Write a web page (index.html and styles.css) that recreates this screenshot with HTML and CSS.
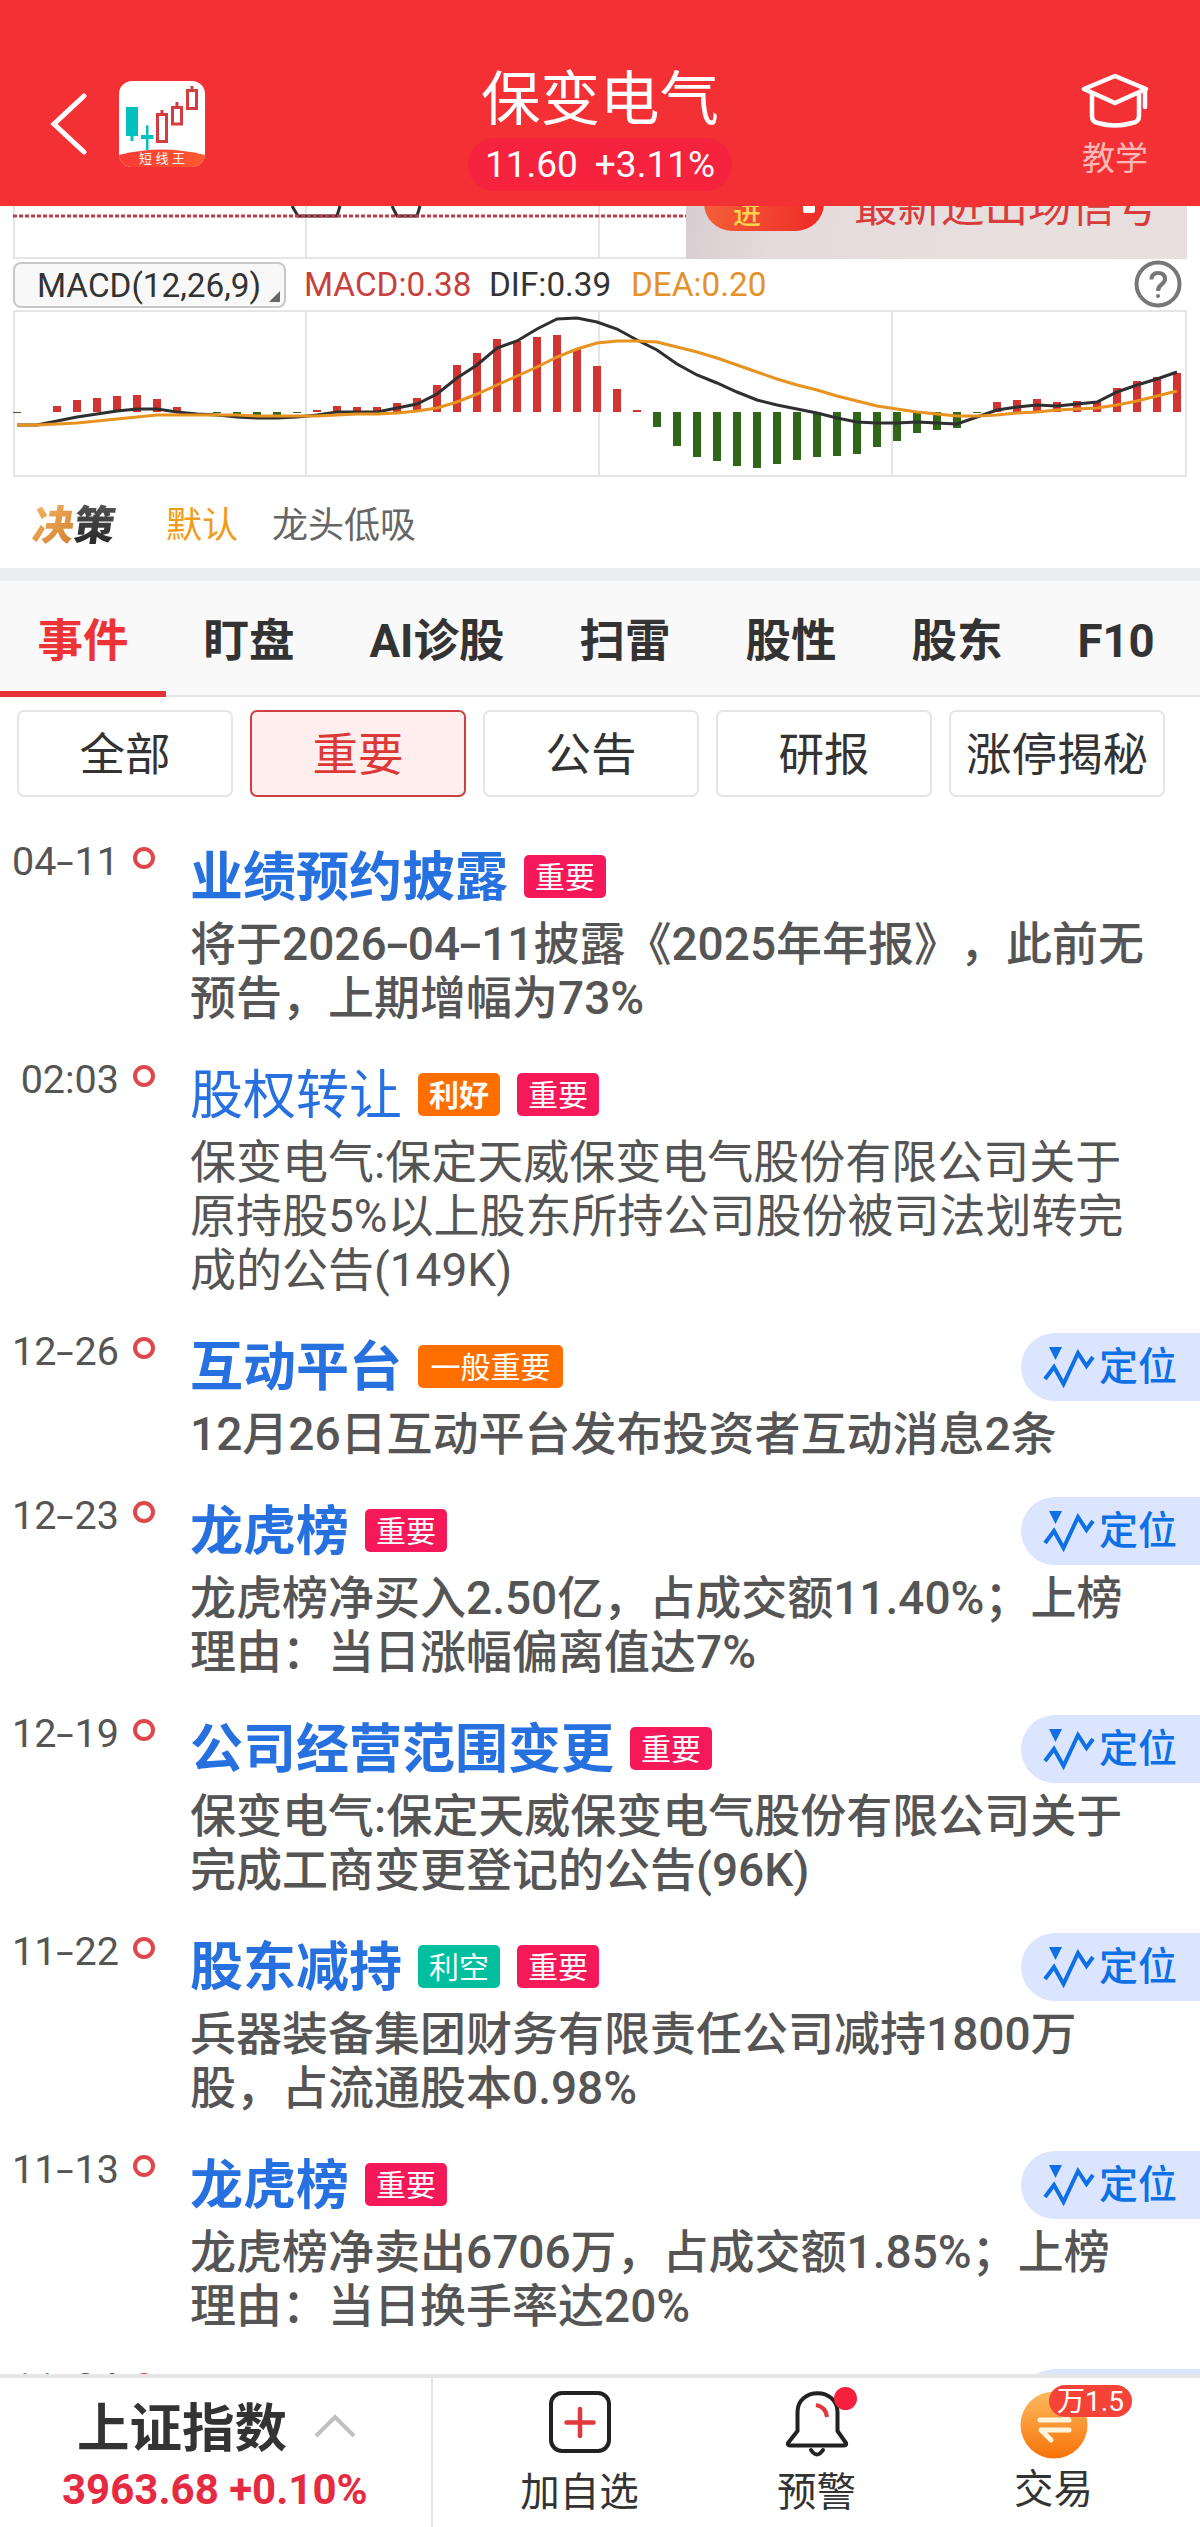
FILE: index.html
```
<!DOCTYPE html>
<html lang="zh-CN">
<head>
	<meta charset="utf-8">
	<meta name="viewport" content="width=device-width, initial-scale=1">
	<title>保变电气</title>
	<link rel="stylesheet" href="styles.css">
</head>
<body>
	<div class="app">
		<header class="header">
			<div class="header-left">
				<svg class="back" viewBox="0 0 38 64"><path d="M34 4 L4 32 L34 60"/></svg>
				<svg class="logo" viewBox="0 0 86 86">
					<defs>
						<clipPath id="logo-clip"><rect width="86" height="86" rx="13"/></clipPath>
						<linearGradient id="logo-bg"><stop offset="0" stop-color="#f83a35"/><stop offset="1" stop-color="#ff5a30"/></linearGradient>
					</defs>
					<g clip-path="url(#logo-clip)">
						<rect width="86" height="86" fill="#fff"/>
						<path d="M0 74 Q43 63 86 74 V86 H0Z" fill="url(#logo-bg)"/>
						<path d="M7 26h12v29h-4.500v5h-3v-5h-4.500z M27 44.500h2.500v9.500h5v4h-5v11h-2.500v-11h-5v-4h5z" fill="#00c0c0"/>
						<g fill="none" stroke="#d43d3f" stroke-width="3">
							<path d="M38.500 33.500h9v27h-9z M43 33v-4 M53.500 26.500h9v16.500h-9z M58 26v-5 M68.500 9.500h9v18h-9z M73 9v-4"/>
						</g>
						<text x="20" y="82" class="logo-text">短线王</text>
					</g>
				</svg>
			</div>
			<div class="header-title">
				<h1>保变电气</h1>
				<div class="price"><span>11.60</span><span>+3.11%</span></div>
			</div>
			<div class="teach">
				<svg viewBox="0 0 68 58"><path d="M34 4 L65 17 L34 31 L3 17Z M11 21 V44 Q11 50 17 51 Q34 56 51 51 Q58 50 58 44 V21 M64 18 V35"/></svg>
				<span>教学</span>
			</div>
		</header>

		<section class="chart">
			<div class="strip">
				<svg class="strip-lines" viewBox="0 0 1174 54">
					<path d="M1 0V52 M293 0V52 M586 0V52" stroke="#e5e5e5" stroke-width="2"/>
					<path d="M0 52H1174" stroke="#e5e5e5" stroke-width="2"/>
					<path d="M279 0L285 10H324L327 0 M379 0L384 10H404L407 0" fill="none" stroke="#2f2f2f" stroke-width="3"/>
					<path d="M0 10H673" stroke="#c23b4b" stroke-width="3" stroke-dasharray="4 2"/>
				</svg>
				<div class="signal">
					<div class="signal-switch"><span>进</span><i></i></div>
					<div class="signal-text">最新进出场信号</div>
				</div>
			</div>
			<div class="macd-bar">
				<div class="macd-select">MACD(12,26,9)</div>
				<span class="macd-value">MACD:0.38</span>
				<span class="dif-value">DIF:0.39</span>
				<span class="dea-value">DEA:0.20</span>
				<svg class="help" viewBox="0 0 48 48"><circle cx="24" cy="24" r="21.500"/><path d="M17.500 19.500 Q17.500 13 24 13 Q31 13 31 19 Q31 22 27.500 24.500 Q24 27 24 31"/><circle class="help-dot" cx="24" cy="36" r="2"/></svg>
			</div>
			<svg id="macd" viewBox="0 0 1174 167">
				<path d="M1 1H1173V166H1Z M293 1V166 M586 1V166 M879 1V166" fill="none" stroke="#e5e5e5" stroke-width="2"/>
			</svg>
			<div class="decision">
				<div class="decision-logo"><span>决</span><span>策</span></div>
				<a class="active">默认</a>
				<a>龙头低吸</a>
			</div>
		</section>

		<nav class="tabs">
			<a class="active">事件</a>
			<a>盯盘</a>
			<a>AI诊股</a>
			<a>扫雷</a>
			<a>股性</a>
			<a>股东</a>
			<a>F10</a>
		</nav>

		<div class="filters">
			<button>全部</button>
			<button class="active">重要</button>
			<button>公告</button>
			<button>研报</button>
			<button>涨停揭秘</button>
		</div>

		<main class="events">
			<article class="event">
				<time>04<b>-</b>11</time><i class="dot"></i>
				<div class="event-body">
					<div class="event-title"><h2>业绩预约披露</h2><span class="tag">重要</span></div>
					<p>将于2026<b>-</b>04<b>-</b>11披露《2025年年报》，此前无<br>预告，上期增幅为73%</p>
				</div>
			</article>
			<article class="event read">
				<time>02:03</time><i class="dot"></i>
				<div class="event-body">
					<div class="event-title"><h2>股权转让</h2><span class="tag good">利好</span><span class="tag">重要</span></div>
					<p>保变电气:保定天威保变电气股份有限公司关于<br>原持股5%以上股东所持公司股份被司法划转完<br>成的公告(149K)</p>
				</div>
			</article>
			<article class="event">
				<time>12<b>-</b>26</time><i class="dot"></i>
				<div class="event-body">
					<div class="event-title"><h2>互动平台</h2><span class="tag normal">一般重要</span></div>
					<p>12月26日互动平台发布投资者互动消息2条</p>
				</div>
				<a class="locate"><svg viewBox="0 0 52 42"><use href="#locate-icon"/></svg>定位</a>
			</article>
			<article class="event">
				<time>12<b>-</b>23</time><i class="dot"></i>
				<div class="event-body">
					<div class="event-title"><h2>龙虎榜</h2><span class="tag">重要</span></div>
					<p>龙虎榜净买入2.50亿，占成交额11.40%；上榜<br>理由：当日涨幅偏离值达7%</p>
				</div>
				<a class="locate"><svg viewBox="0 0 52 42"><use href="#locate-icon"/></svg>定位</a>
			</article>
			<article class="event">
				<time>12<b>-</b>19</time><i class="dot"></i>
				<div class="event-body">
					<div class="event-title"><h2>公司经营范围变更</h2><span class="tag">重要</span></div>
					<p>保变电气:保定天威保变电气股份有限公司关于<br>完成工商变更登记的公告(96K)</p>
				</div>
				<a class="locate"><svg viewBox="0 0 52 42"><use href="#locate-icon"/></svg>定位</a>
			</article>
			<article class="event">
				<time>11<b>-</b>22</time><i class="dot"></i>
				<div class="event-body">
					<div class="event-title"><h2>股东减持</h2><span class="tag bad">利空</span><span class="tag">重要</span></div>
					<p>兵器装备集团财务有限责任公司减持1800万<br>股，占流通股本0.98%</p>
				</div>
				<a class="locate"><svg viewBox="0 0 52 42"><use href="#locate-icon"/></svg>定位</a>
			</article>
			<article class="event">
				<time>11<b>-</b>13</time><i class="dot"></i>
				<div class="event-body">
					<div class="event-title"><h2>龙虎榜</h2><span class="tag">重要</span></div>
					<p>龙虎榜净卖出6706万，占成交额1.85%；上榜<br>理由：当日换手率达20%</p>
				</div>
				<a class="locate"><svg viewBox="0 0 52 42"><use href="#locate-icon"/></svg>定位</a>
			</article>
			<article class="event">
				<time>11<b>-</b>04</time><i class="dot"></i>
				<div class="event-body"></div>
				<a class="locate"></a>
			</article>
		</main>

		<footer class="footer">
			<div class="index">
				<div class="index-name">上证指数
					<svg viewBox="0 0 42 24"><path d="M2 22 L21 3 L40 22"/></svg>
				</div>
				<div class="index-value">3963.68 +0.10%</div>
			</div>
			<div class="actions">
				<a class="action">
					<svg viewBox="0 0 70 70"><rect x="6" y="5" width="58" height="58" rx="11" fill="none" stroke="#222" stroke-width="4"/><path d="M35 21V48 M21.500 34.500H48.500" stroke="#e0383b" stroke-width="4.500" stroke-linecap="round"/></svg>
					<span>加自选</span>
				</a>
				<a class="action">
					<svg viewBox="0 0 70 70" fill="none" stroke-linecap="round" stroke-linejoin="round">
						<path d="M15.500 43 V24 C15.500 -1 55.500 -1 55.500 24 V43 L64 55 Q65 57.500 62 57.500 H8 Q5 57.500 6 55Z M29 62 Q35 71 41 62" stroke="#222" stroke-width="4"/>
						<path d="M34 17 Q44 19 45 29" stroke="#e0383b" stroke-width="4" stroke-linecap="butt"/>
					</svg>
					<i class="red-dot"></i>
					<span>预警</span>
				</a>
				<a class="action trade">
					<svg viewBox="0 0 70 70">
						<defs><linearGradient id="coin" x2="0" y2="1"><stop offset="0" stop-color="#fdbb60"/><stop offset="1" stop-color="#f87208"/></linearGradient></defs>
						<circle cx="35" cy="35" r="33.500" fill="url(#coin)"/>
						<path d="M21 30H50L41 22 M50 40H22L32 50" fill="none" stroke="#fff4de" stroke-width="5" stroke-linecap="round" stroke-linejoin="round"/>
					</svg>
					<i class="badge">万1.5</i>
					<span>交易</span>
				</a>
			</div>
		</footer>
	</div>

	<svg class="symbols">
		<symbol id="locate-icon" viewBox="0 0 52 42">
			<path d="M6 1H19L12.500 14Z" fill="#0d70e6"/>
			<path d="M2 33L11 21L20.500 38L35 7L43.500 20L50 11" fill="none" stroke="#0d70e6" stroke-width="4"/>
		</symbol>
	</svg>

	<script type="text/javascript">
		//one value per trading day, pixels above / below zero line
		const bars = [-1,0,6,12,14,16,17,13,5,0,-1,-2,-3,-3,-1,2,6,5,5,9,14,27,47,59,73,71,75,77,63,46,23,2,-15,-34,-45,-49,-54,-56,-52,-48,-45,-44,-42,-35,-29,-21,-18,-16,-1,10,12,13,10,11,11,24,31,35,39];
		const dif = [-13,-13,-9,-5,-2,1,3,3,0,-2,-3,-5,-6,-6,-5,-3,0,0,0,4,8,18,34,47,64,71,83,93,94,90,83,72,62,48,37,29,20,12,7,3,-1,-6,-10,-11,-11,-10,-11,-12,-5,2,5,7,6,8,10,20,27,33,40];
		const dea = [-13,-13,-12,-11,-9,-7,-5,-3,-3,-3,-3,-3,-4,-4,-4,-4,-3,-2,-2,-1,1,4,10,18,27,36,45,55,63,69,71,71,70,65,60,54,47,40,33,27,22,16,11,6,3,0,-2,-4,-4,-3,-1,0,2,3,4,7,11,16,21];

		const svg = document.getElementById("macd");
		const zero = 102;
		const step = 20;

		const add = (name,attrs)=>{
			const el = document.createElementNS("http://www.w3.org/2000/svg",name);
			for(let key in attrs){
				el.setAttribute(key,attrs[key]);
			}
			svg.appendChild(el);
		}

		//Bars
		bars.forEach((v,i)=>{
			if(v == 0) return;
			add("rect",{
				x: i*step,
				y: v > 0 ? zero-v : zero,
				width: 8,
				height: Math.abs(v),
				fill: v > 0 ? "#d23531" : "#306617"
			});
		});

		//Lines
		const drawLine = (data,color)=>{
			const points = data.map((v,i)=>(i*step+4)+","+(zero-v)).join(" ");
			add("polyline",{points: points, fill: "none", stroke: color, "stroke-width": 3});
		}
		drawLine(dif,"#2f2f2f");
		drawLine(dea,"#e8921f");
	</script>
</body>
</html>
```
FILE: styles.css
```
*{
	padding: 0;
	margin: 0;
	box-sizing: border-box;
}
body{
	background: #fff;
	color: #333;
	font-family: Roboto,"Noto Sans CJK SC",sans-serif;
	text-spacing-trim: space-all;
}
i{
	font-style: normal;
}
.app{
	width: 1200px;
	height: 2527px;
	display: flex;
	flex-direction: column;
	overflow: hidden;
}
.symbols{
	display: none;
}

/* header */
.header{
	height: 206px;
	flex-shrink: 0;
	background: #f33033;
	color: #fff;
	display: grid;
	grid-template-columns: 1fr 264px 1fr;
}
.header-left{
	display: flex;
	align-items: center;
	padding: 42px 0 0 50px;
}
.back{
	width: 38px;
	height: 64px;
	fill: none;
	stroke: #fff;
	stroke-width: 5;
	stroke-linecap: round;
}
.logo{
	width: 86px;
	height: 86px;
	margin-left: 31px;
}
.logo-text{
	font-size: 13px;
	letter-spacing: 3.5px;
	fill: #fff;
}
.header-title{
	padding-top: 62px;
	text-align: center;
}
.header-title h1{
	font-size: 59.5px;
	font-weight: 400;
	line-height: 76px;
	white-space: nowrap;
}
.price{
	height: 53px;
	border-radius: 27px;
	background: #f5233e;
	display: flex;
	align-items: center;
	justify-content: center;
	gap: 17px;
	font-size: 37px;
	line-height: 55px;
}
.teach{
	justify-self: end;
	width: 68px;
	margin-right: 51px;
	padding-top: 72px;
	text-align: center;
}
.teach svg{
	display: block;
	width: 68px;
	height: 58px;
	fill: none;
	stroke: #fff;
	stroke-width: 4.5;
	stroke-linejoin: round;
	stroke-linecap: round;
}
.teach span{
	display: block;
	margin-top: 9px;
	font-size: 33px;
	line-height: 40px;
	color: #fbb9b6;
	white-space: nowrap;
}

/* chart */
.chart{
	height: 362px;
	flex-shrink: 0;
	padding: 0 13px;
}
.strip{
	height: 54px;
	position: relative;
	overflow: hidden;
}
.strip-lines{
	display: block;
	width: 1174px;
	height: 54px;
}
.signal{
	position: absolute;
	top: 0;
	right: 0;
	width: 501px;
	height: 53px;
	background: linear-gradient(100deg,#d8cdd0,#e6dcdd 20%,#e8e0df);
	display: flex;
	align-items: flex-end;
	padding: 0 0 30px 18px;
	overflow: hidden;
}
.signal-switch{
	width: 120px;
	height: 58px;
	margin-bottom: -2px;
	flex-shrink: 0;
	border-radius: 28px;
	background: linear-gradient(100deg,#f5623a,#ee2a26);
	display: flex;
	align-items: flex-end;
	justify-content: space-between;
	padding: 0 9px 0 29px;
	font-size: 28px;
	line-height: 32px;
	font-weight: 500;
	color: #ffd34d;
}
.signal-switch i{
	width: 12px;
	height: 34px;
	margin-bottom: 18px;
	border-radius: 2px;
	background: #fff;
}
.signal-text{
	margin: 0 0 -4px 30px;
	font-size: 43.5px;
	line-height: 50px;
	color: #d93a3a;
	white-space: nowrap;
}
.macd-bar{
	height: 50px;
	display: flex;
	align-items: center;
	padding: 0 5px 0 0;
	font-size: 33.3px;
	line-height: 46px;
}
.macd-select{
	position: relative;
	width: 273px;
	height: 46px;
	margin-right: 18px;
	padding-left: 22px;
	border: 2px solid #c8c8c8;
	border-radius: 8px;
	background: #f8f8f8;
	line-height: 43px;
	white-space: nowrap;
}
.macd-select::after{
	content: "";
	position: absolute;
	right: 4px;
	bottom: 4px;
	border-left: 11px solid transparent;
	border-bottom: 11px solid #666;
}
.macd-value{
	width: 185px;
	color: #c8403c;
}
.dif-value{
	width: 142px;
}
.dea-value{
	color: #e5912a;
}
.help{
	width: 48px;
	height: 48px;
	margin: -2px 0 0 auto;
	fill: none;
	stroke: #777;
	stroke-width: 4;
}
.help .help-dot{
	fill: #777;
	stroke: none;
}
#macd{
	display: block;
	width: 1174px;
	height: 167px;
}
.decision{
	display: flex;
	align-items: center;
	height: 94px;
	padding: 4px 0 0 20px;
	font-size: 36px;
	line-height: 54px;
}
.decision a{
	color: #666;
	margin-right: 34px;
}
.decision a.active{
	color: #f39a16;
}
.decision-logo{
	width: 133px;
	font-size: 41px;
	font-weight: 900;
	transform: skewX(-8deg);
}
.decision-logo span{
	background: linear-gradient(135deg,#f7b565,#cd7d2a);
	-webkit-background-clip: text;
	background-clip: text;
	color: transparent;
}
.decision-logo span + span{
	background-image: linear-gradient(#555,#222);
}

/* tabs */
.tabs{
	height: 129px;
	flex-shrink: 0;
	border-top: 13px solid #ecedef;
	border-bottom: 2px solid #e5e5e5;
	background: #f9f9f9;
	display: flex;
}
.tabs a{
	height: 116px;
	padding: 0 37.5px;
	font-size: 45.5px;
	font-weight: 700;
	line-height: 122px;
	white-space: nowrap;
}
.tabs a.active{
	color: #ee3336;
	border-bottom: 6px solid #e43438;
}
.filters{
	display: flex;
	flex-shrink: 0;
	gap: 17px;
	padding: 13px 17px 0;
}
.filters button{
	width: 216px;
	height: 87px;
	border: 2px solid #e5e5e5;
	border-radius: 7px;
	background: #fff;
	color: #333;
	font-family: inherit;
	font-size: 45.5px;
	line-height: 83px;
	padding-top: 2px;
	white-space: nowrap;
}
.filters button.active{
	border-color: #cc4040;
	background: #feefee;
	color: #dc3936;
}

/* events */
.events{
	flex: 1;
	min-height: 0;
	padding-top: 46px;
	overflow: hidden;
}
.event{
	display: flex;
	align-items: flex-start;
	position: relative;
	padding-bottom: 36px;
}
.event time{
	width: 119px;
	text-align: right;
	font-size: 39.5px;
	line-height: 37px;
	color: #555;
}
/* wide hyphen inside dates */
.event b{
	display: inline-block;
	width: .46em;
	text-align: center;
	font-weight: inherit;
	transform: scaleX(1.6);
}
.dot{
	width: 22px;
	height: 22px;
	margin: 4px 0 0 14px;
	border: 4px solid #e0474b;
	border-radius: 50%;
}
.event-body{
	margin-left: 35px;
}
.event-title{
	display: flex;
	align-items: center;
	height: 66px;
	margin-bottom: 8px;
}
.event-title h2{
	margin-right: 16px;
	padding-top: 4px;
	font-size: 53px;
	font-weight: 700;
	line-height: 66px;
	color: #2670e0;
}
.event p{
	font-size: 46px;
	line-height: 54px;
	font-weight: 500;
	color: #555;
	white-space: nowrap;
}
.event.read h2,
.event.read p{
	font-weight: 400;
}
.tag{
	height: 43px;
	margin-right: 17px;
	padding: 0 11px;
	border-radius: 5px;
	background: #f5195a;
	color: #fff;
	font-size: 30px;
	line-height: 46px;
}
.tag.good{
	background: #ff6f00;
	font-weight: 700;
}
.tag.normal{
	padding: 0 12.5px;
	background: #ff6f00;
}
.tag.bad{
	background: #00bf9f;
}
.locate{
	position: absolute;
	top: 0;
	right: 0;
	width: 179px;
	height: 68px;
	padding-left: 22px;
	border-radius: 34px 0 0 34px;
	background: #dbe5ff;
	display: flex;
	align-items: center;
	gap: 4px;
	font-size: 39px;
	line-height: 70px;
	font-weight: 500;
	color: #0d70e6;
}
.locate svg{
	width: 52px;
	height: 42px;
}

/* bottom bar */
.footer{
	height: 153px;
	flex-shrink: 0;
	border-top: 4px solid #e6e6e6;
	background: #fff;
	display: flex;
}
.index{
	width: 433px;
	border-right: 2px solid #e6e6e6;
	padding-top: 19px;
}
.index-name{
	display: flex;
	align-items: center;
	padding-left: 77px;
	font-size: 52.5px;
	font-weight: 700;
	line-height: 64px;
}
.index-name svg{
	width: 42px;
	height: 24px;
	margin: -6px 0 0 27px;
	fill: none;
	stroke: #c0c0c0;
	stroke-width: 4;
}
.index-value{
	padding-left: 62px;
	font-size: 42px;
	font-weight: 700;
	line-height: 57px;
	color: #e62a41;
	white-space: nowrap;
}
.actions{
	flex: 1;
	display: flex;
	padding: 10px 28px 0;
}
.action{
	flex: 1;
	position: relative;
	display: flex;
	flex-direction: column;
	align-items: center;
	font-size: 39.5px;
	line-height: 50px;
}
.action svg{
	width: 70px;
	height: 70px;
	margin-bottom: 10px;
}
.trade svg{
	margin: 2px 0 5px;
}
.red-dot{
	position: absolute;
	left: 136px;
	top: -1px;
	width: 23px;
	height: 23px;
	border-radius: 50%;
	background: #f5203c;
}
.badge{
	position: absolute;
	left: 114px;
	top: -3px;
	width: 83px;
	height: 32px;
	border-radius: 16px;
	background: #f54437;
	color: #fff;
	font-size: 28px;
	line-height: 34px;
	text-align: center;
}
```
